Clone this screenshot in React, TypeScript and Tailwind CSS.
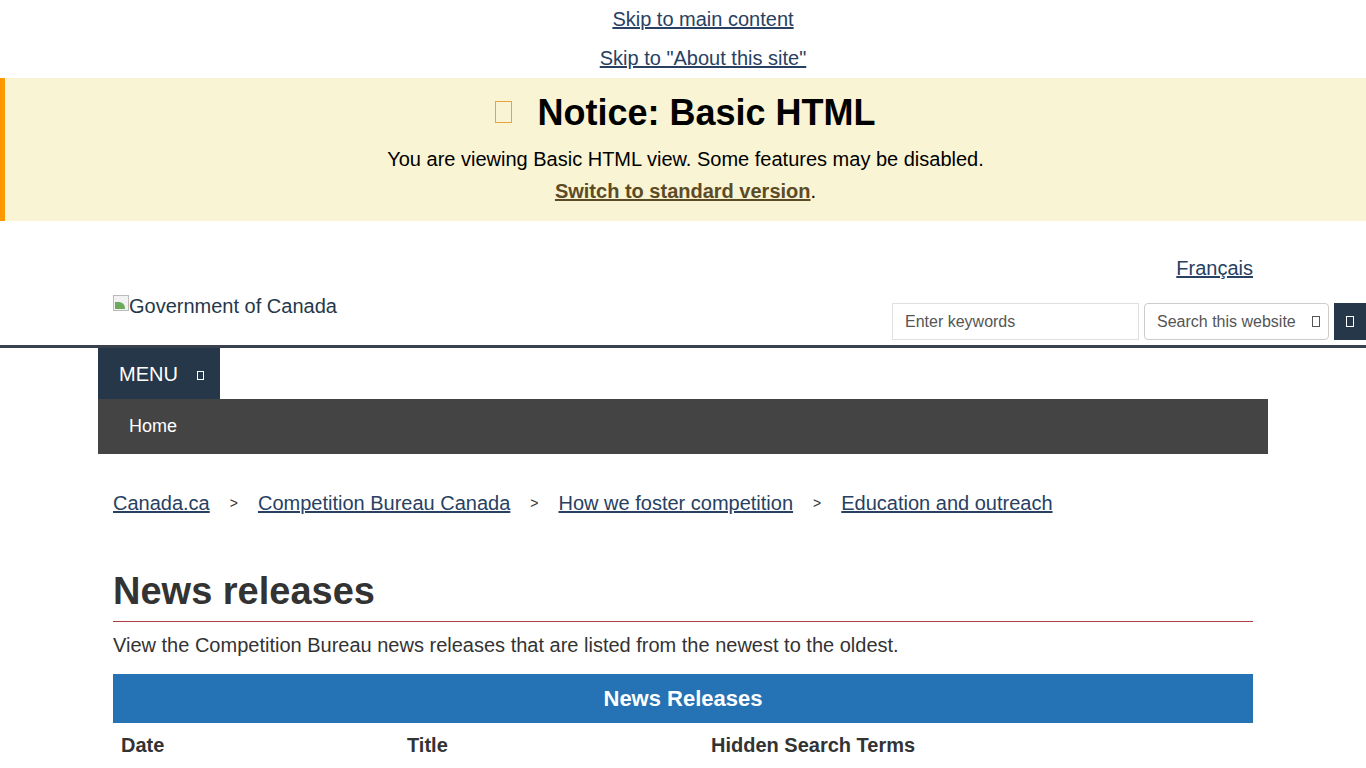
import React from 'react';

const font = { fontFamily: '"Liberation Sans", Arial, sans-serif' };

function Missing({ className }: { className?: string }) {
  // the page shows an icon font that failed to load: a hollow box glyph
  return <span className={`inline-block border border-current ${className ?? ''}`} />;
}

export default function App() {
  return (
    <div style={font} className="min-h-screen bg-white text-[20px] text-[#333]">
      {/* Skip links */}
      <div className="flex flex-col items-center pt-[6px] pl-[40px]">
        <a href="#" className="leading-[26px] text-[#284162] underline">Skip to main content</a>
        <a href="#" className="mt-[13px] leading-[26px] text-[#284162] underline">Skip to "About this site"</a>
      </div>

      {/* Notice */}
      <div className="mt-[7px] h-[143px] border-l-[5px] border-[#ff9900] bg-[#f9f4d4] flex flex-col items-center pt-[15px]">
        <div className="flex items-center gap-[25px]">
          <Missing className="w-[17px] h-[22px] text-[#e8a33a] -mt-[2px]" />
          <h2 className="text-[36px] font-bold text-black leading-[40px]">Notice: Basic HTML</h2>
        </div>
        <p className="mt-[14px] leading-[24px] text-black">You are viewing Basic HTML view. Some features may be disabled.</p>
        <p className="mt-[9px] leading-[22px] text-black">
          <a href="#" className="font-bold text-[#5c4b25] underline">Switch to standard version</a>.
        </p>
      </div>

      {/* Header */}
      <div className="w-[1140px] mx-auto">
        <div className="flex justify-end pt-[35px]">
          <a href="#" className="leading-[24px] text-[#284162] underline">Français</a>
        </div>
      </div>
      <div className="flex items-start mt-[10px] h-[55px]">
        <div className="ml-[113px] flex items-center pt-[4px]">
          <span className="inline-block w-[16px] h-[16px] relative -mt-[6px]">
            <span className="absolute left-0 top-0 w-[16px] h-[16px] border border-[#bbb] bg-[#f2f2f2]" />
            <span className="absolute left-[2px] bottom-[2px] w-[10px] h-[7px] bg-[#6aaa5a] rounded-tr-[6px]" />
          </span>
          <span className="text-[#26374a] leading-[24px]">Government of Canada</span>
        </div>
        <div className="ml-auto flex items-center mt-[13px]">
          <div className="w-[247px] h-[37px] border border-[#e0e0e0] flex items-center px-[12px] text-[16px] text-[#555]">Enter keywords</div>
          <div className="ml-[5px] w-[185px] h-[37px] border border-[#ccc] rounded-[4px] flex items-center pl-[12px] pr-[8px] text-[16px] text-[#555]">
            <span>Search this website</span>
            <Missing className="ml-auto w-[8px] h-[11px] text-[#555]" />
          </div>
          <div className="ml-[5px] w-[32px] h-[37px] bg-[#26374a] flex items-center justify-center">
            <Missing className="w-[8px] h-[11px] text-white" />
          </div>
        </div>
      </div>
      <div className="h-[3px] bg-[#38414d]" />

      {/* Menu */}
      <div className="w-[1170px] mx-auto">
        <div className="w-[122px] h-[51px] bg-[#26374a] flex items-center pl-[21px] text-white">
          <span className="leading-[24px]">MENU</span>
          <Missing className="ml-[19px] mt-[4px] w-[7px] h-[9px] text-white" />
        </div>
        <div className="h-[55px] bg-[#444] flex items-center pl-[31px] text-white text-[18px]">Home</div>
      </div>

      {/* Breadcrumbs */}
      <div className="w-[1140px] mx-auto">
        <nav className="flex items-center mt-[37px] leading-[24px]">
          <a href="#" className="text-[#284162] underline">Canada.ca</a>
          <span className="mx-[20px] text-[14px] text-[#333]">&gt;</span>
          <a href="#" className="text-[#284162] underline">Competition Bureau Canada</a>
          <span className="mx-[20px] text-[14px] text-[#333]">&gt;</span>
          <a href="#" className="text-[#284162] underline">How we foster competition</a>
          <span className="mx-[20px] text-[14px] text-[#333]">&gt;</span>
          <a href="#" className="text-[#284162] underline">Education and outreach</a>
        </nav>

        {/* Title */}
        <h1 className="mt-[54px] text-[38px] font-bold leading-[44px] text-[#333] pb-[8px]">News releases</h1>
        <div className="h-px bg-[#af3c43]" />
        <p className="mt-[10px] leading-[26px]">View the Competition Bureau news releases that are listed from the newest to the oldest.</p>

        {/* Table */}
        <table className="mt-[16px] w-full border-collapse">
          <caption className="h-[49px] bg-[#2572b4] text-white font-bold text-[22px] leading-[49px] text-center">News Releases</caption>
          <thead>
            <tr className="text-left">
              <th className="w-[286px] px-[8px] pt-[10px] leading-[24px] font-bold">Date</th>
              <th className="w-[304px] px-[8px] pt-[10px] leading-[24px] font-bold">Title</th>
              <th className="px-[8px] pt-[10px] leading-[24px] font-bold">Hidden Search Terms</th>
            </tr>
          </thead>
        </table>
      </div>
    </div>
  );
}
